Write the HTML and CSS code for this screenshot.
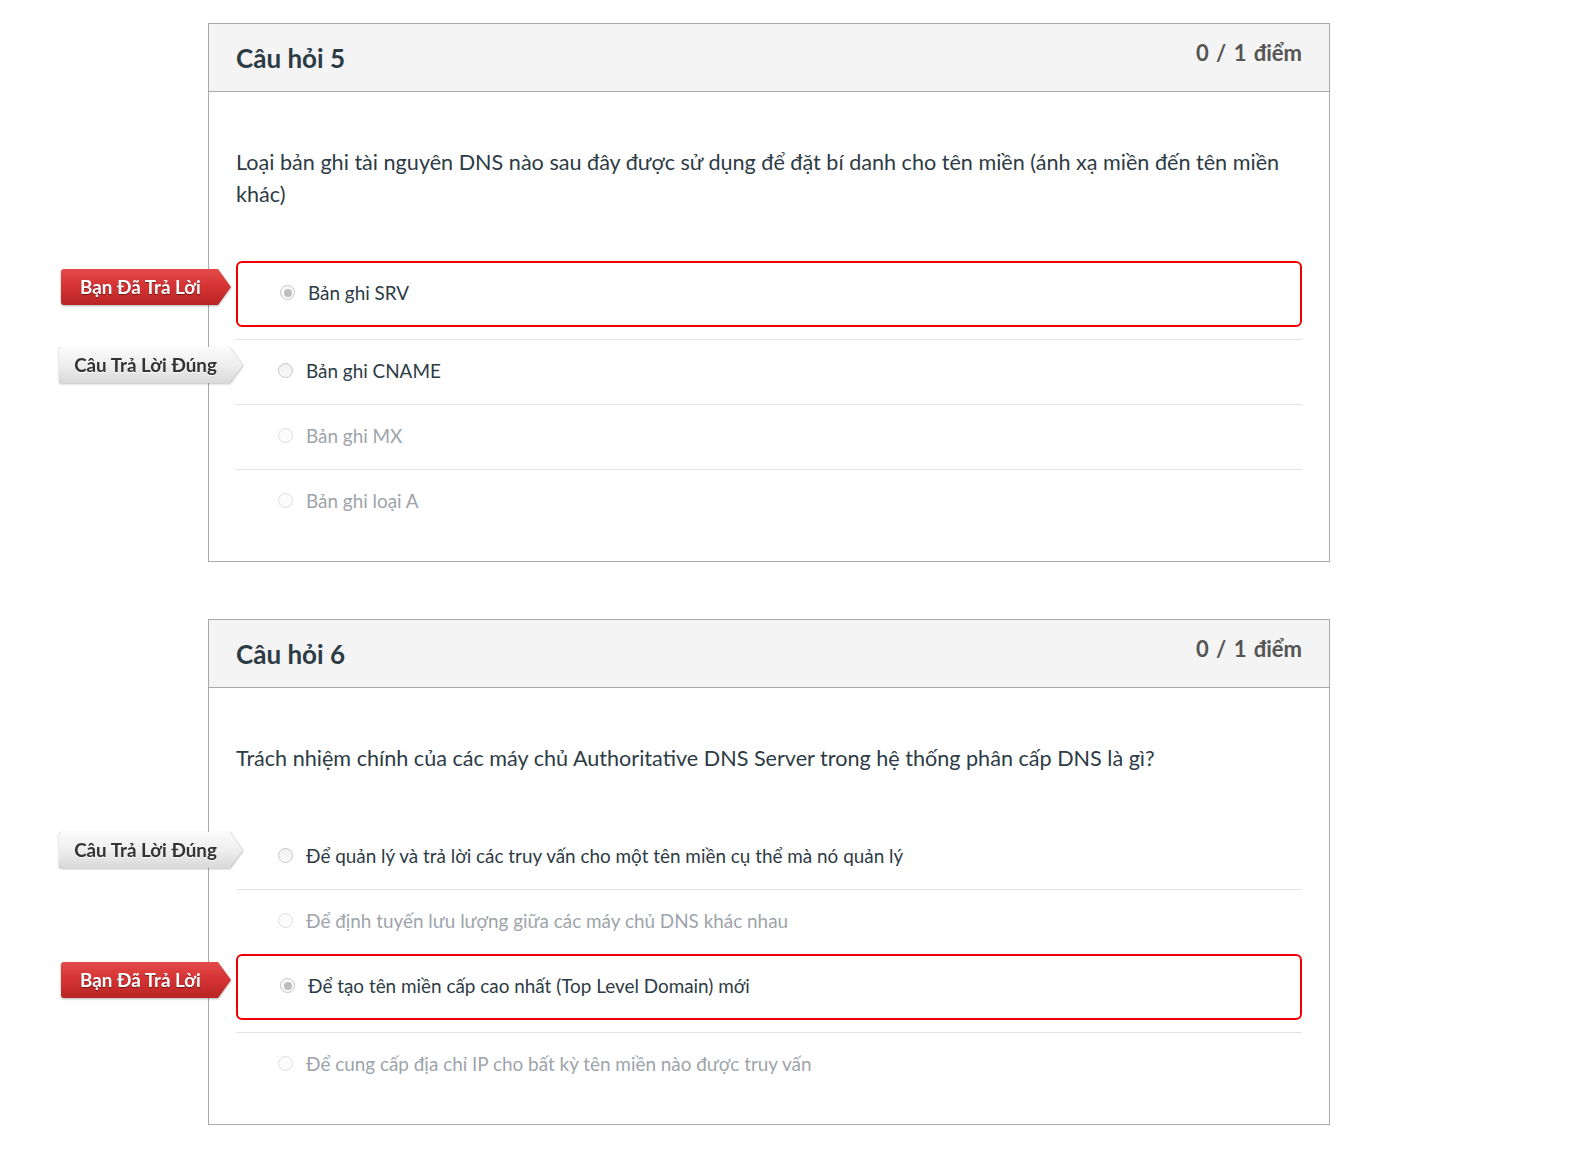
FILE: index.html
```html
<!DOCTYPE html>
<html lang="vi">
<head>
<meta charset="utf-8">
<title>Kết quả bài kiểm tra</title>
<link rel="stylesheet" href="styles.css">
</head>
<body>
<div class="page">
  <div class="question">
    <div class="q-header">
      <h2 class="q-title">Câu hỏi 5</h2>
      <div class="q-points">0 / 1 điểm</div>
    </div>
    <div class="q-body">
      <p class="q-text">Loại bản ghi tài nguyên DNS nào sau đây được sử dụng để đặt bí danh cho tên miền (ánh xạ miền đến tên miền khác)</p>
      <div class="answers">
        <div class="answer answer--wrong">
          <span class="tag tag--you"><span class="tag-inner">Bạn Đã Trả Lời</span></span>
          <span class="radio radio--checked"></span>
          <span class="answer-text">Bản ghi SRV</span>
        </div>
        <div class="answer">
          <span class="tag tag--correct"><span class="tag-inner">Câu Trả Lời Đúng</span></span>
          <span class="radio"></span>
          <span class="answer-text">Bản ghi CNAME</span>
        </div>
        <div class="answer answer--muted">
          <span class="radio"></span>
          <span class="answer-text">Bản ghi MX</span>
        </div>
        <div class="answer answer--muted">
          <span class="radio"></span>
          <span class="answer-text">Bản ghi loại A</span>
        </div>
      </div>
    </div>
  </div>

  <div class="question">
    <div class="q-header">
      <h2 class="q-title">Câu hỏi 6</h2>
      <div class="q-points">0 / 1 điểm</div>
    </div>
    <div class="q-body">
      <p class="q-text">Trách nhiệm chính của các máy chủ Authoritative DNS Server trong hệ thống phân cấp DNS là gì?</p>
      <div class="answers">
        <div class="answer">
          <span class="tag tag--correct"><span class="tag-inner">Câu Trả Lời Đúng</span></span>
          <span class="radio"></span>
          <span class="answer-text">Để quản lý và trả lời các truy vấn cho một tên miền cụ thể mà nó quản lý</span>
        </div>
        <div class="answer answer--muted">
          <span class="radio"></span>
          <span class="answer-text">Để định tuyến lưu lượng giữa các máy chủ DNS khác nhau</span>
        </div>
        <div class="answer answer--wrong">
          <span class="tag tag--you"><span class="tag-inner">Bạn Đã Trả Lời</span></span>
          <span class="radio radio--checked"></span>
          <span class="answer-text">Để tạo tên miền cấp cao nhất (Top Level Domain) mới</span>
        </div>
        <div class="answer answer--muted">
          <span class="radio"></span>
          <span class="answer-text">Để cung cấp địa chỉ IP cho bất kỳ tên miền nào được truy vấn</span>
        </div>
      </div>
    </div>
  </div>
</div>
</body>
</html>
```

FILE: styles.css
```css
* { box-sizing: border-box; }

body {
  margin: 0;
  background: #fff;
  font-family: Lato, "Noto Sans", "Liberation Sans", sans-serif;
  color: #2d3b45;
}

.page {
  padding: 23px 0 0 208px;
  width: 1330px;
}

.question {
  border: 1px solid #a9a9a9;
  margin-bottom: 57px;
  background: #fff;
}

.q-header {
  display: flex;
  justify-content: space-between;
  align-items: flex-start;
  height: 68px;
  padding: 0 27px 0 27px;
  background: #f4f4f4;
  border-bottom: 1px solid #a9a9a9;
}

.q-title {
  margin: 19px 0 0 0;
  font-size: 26px;
  line-height: 30px;
  font-weight: 700;
  color: #2d3b45;
}

.q-points {
  margin-top: 16px;
  font-size: 22px;
  line-height: 25px;
  font-weight: 700;
  word-spacing: 2px;
  color: #555555;
}

.q-body {
  padding: 54px 27px 27px 27px;
}

.q-text {
  margin: 0 0 51px 0;
  font-size: 21.6px;
  line-height: 32px;
  color: #2d3b45;
}

.answer {
  position: relative;
  display: flex;
  align-items: center;
  height: 65px;
  padding-left: 42px;
  padding-bottom: 4px;
  border-top: 1px solid #e3e3e3;
  font-size: 18.9px;
  color: #2d3b45;
}

.answers > .answer:first-child { border-top: none; height: 64px; }

.answer--muted { color: #9da4aa; }

.answer--wrong {
  height: 66px;
  border: 2px solid #f00000;
  border-radius: 6px;
  padding-left: 42px;
  padding-bottom: 3px;
  margin-bottom: 12px;
}

.answers > .answer--wrong:first-child { border-top: 2px solid #f00000; height: 66px; }

.radio {
  flex: none;
  width: 15px;
  height: 15px;
  border-radius: 50%;
  border: 1px solid #c6c6c6;
  background: linear-gradient(#efefef, #fafafa);
  margin-right: 13px;
  position: relative;
}

.answer--muted .radio { border-color: #dedede; background: #fbfbfb; }

.radio--checked {
  border-color: #c4c4c4;
  background: #fafafa;
}

.radio--checked::after {
  content: "";
  position: absolute;
  left: 2.5px;
  top: 2.5px;
  width: 8px;
  height: 8px;
  border-radius: 50%;
  background: #bdbdbd;
}

.answer-text { white-space: nowrap; }

.tag {
  position: absolute;
  left: -177px;
  top: 7px;
  height: 36px;
  filter: drop-shadow(0 1px 1px rgba(0, 0, 0, 0.3));
}

.answer--wrong .tag { top: 6px; left: -177px; }

.tag-inner {
  display: flex;
  align-items: center;
  justify-content: center;
  height: 36px;
  padding: 0 13px 1px 2px;
  border-radius: 3px 0 0 3px;
  clip-path: polygon(0 0, calc(100% - 13px) 0, 100% 50%, calc(100% - 13px) 100%, 0 100%);
  font-size: 18.8px;
  font-weight: 700;
  white-space: nowrap;
}

.tag--you .tag-inner {
  width: 170px;
  background: linear-gradient(#e44b4b 0%, #d63434 45%, #b92424 100%);
  color: #fff;
  text-shadow: 0 1px 1px rgba(0, 0, 0, 0.45);
}

.tag--correct { left: -177px; }

.tag--correct .tag-inner {
  width: 184px;
  background: linear-gradient(#fbfbfb 0%, #eeeeee 50%, #d9d9d9 100%);
  color: #333;
  text-shadow: 0 1px 0 rgba(255, 255, 255, 0.8);
}

.tag--correct { filter: drop-shadow(0 0 0.6px #9a9a9a) drop-shadow(0 1px 1px rgba(0, 0, 0, 0.25)); }
```
